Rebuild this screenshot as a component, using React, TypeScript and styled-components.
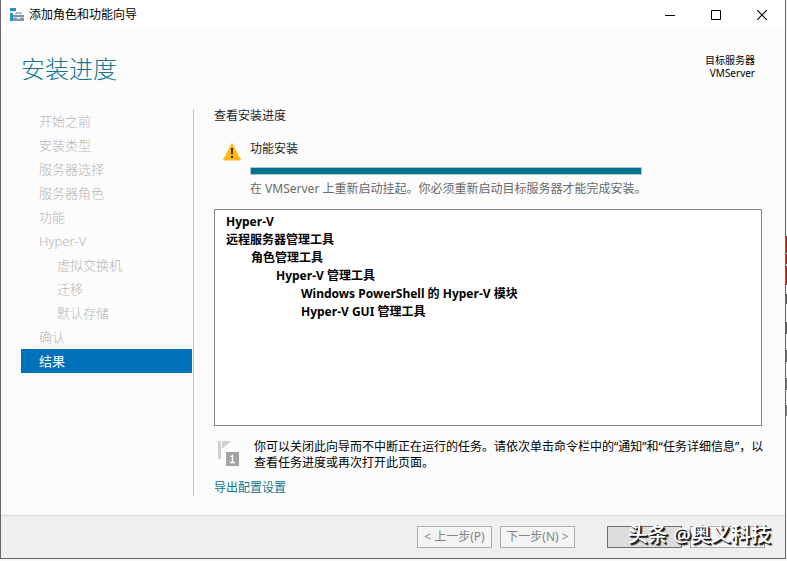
import React from "react";
import styled, { createGlobalStyle } from "styled-components";

const GlobalStyle = createGlobalStyle`
  *, *::before, *::after { box-sizing: border-box; }
  html, body, #root { height: 100%; }
  body {
    margin: 0;
    overflow: hidden;
    font: 12px/16px "Noto Sans", "Noto Sans CJK SC", sans-serif;
    color: #1e1e1e;
  }
`;

const Desktop = styled.div`
  min-height: 100%;
  display: flex;
  padding: 0 1px 2px 0;
  background: linear-gradient(
      to bottom,
      #f4f4f4 236px, #b3121d 236px 253px, #e9c9cb 253px 254px, #b3121d 254px 264px,
      #e9c9cb 264px 266px, #b3121d 266px 285px, #f4f4f4 285px 294px, #555 294px 304px,
      #f4f4f4 304px 322px, #555 322px 334px, #f4f4f4 334px 350px, #666 350px 362px,
      #f4f4f4 362px 378px, #777 378px 390px, #f4f4f4 390px 405px, #777 405px 416px,
      #f8f8f8 416px
    );
`;

const Window = styled.main`
  position: relative;
  flex: 1;
  min-width: 0;
  display: flex;
  flex-direction: column;
  border: 1px solid #666;
  border-top: 0;
  background: #fcfcfc;
`;

const TitleBar = styled.header`
  display: flex;
  align-items: center;
  height: 30px;
  padding-left: 8px;
  background: #fff;
  color: #000;
`;

const TitleText = styled.span`
  flex: 1;
  margin-left: 4px;
`;

const CaptionButton = styled.button`
  display: grid;
  place-items: center;
  width: 46px;
  height: 28px;
  padding: 0;
  border: 0;
  background: none;
  color: #000;
`;

const Heading = styled.div`
  display: flex;
  justify-content: space-between;
  align-items: flex-start;
  padding: 21px 30px 0 20px;
  height: 79px;
`;

const PageTitle = styled.h1`
  margin: 0;
  font-size: 24px;
  line-height: 36px;
  font-weight: 300;
  color: #12758f;
`;

const Destination = styled.div`
  padding-top: 3px;
  font-size: 10px;
  line-height: 13px;
  text-align: right;
  color: #000;
`;

const Body = styled.div`
  flex: 1;
  display: flex;
  padding: 0 20px 19px;
`;

const Steps = styled.nav`
  flex: none;
  width: 173px;
  border-right: 1px solid #c4c4c4;
  padding-right: 1px;
`;

const StepList = styled.ul`
  list-style: none;
  margin: 0;
  padding: 0;
`;

const Step = styled.li<{ $nested?: boolean; $current?: boolean }>`
  height: 24px;
  padding-left: ${(p) => (p.$nested ? 36 : 18)}px;
  font-size: 13px;
  line-height: 24px;
  font-weight: ${(p) => (p.$current ? 400 : 300)};
  color: ${(p) => (p.$current ? "#fff" : "#b4b4b4")};
  background: ${(p) => (p.$current ? "#0072bc" : "transparent")};
`;

const Content = styled.section`
  flex: 1;
  min-width: 0;
  display: flex;
  flex-direction: column;
  padding-left: 20px;
`;

const SectionLabel = styled.div`
  line-height: 14px;
`;

const Job = styled.div`
  display: grid;
  grid-template-columns: 20px minmax(0, 1fr);
  column-gap: 8px;
  margin-top: 17px;
  padding: 0 123px 0 8px;
`;

const JobIcon = styled.div`
  padding-top: 2px;
`;

const JobTitle = styled.div`
  line-height: 18px;
`;

const Progress = styled.progress`
  display: block;
  width: 100%;
  height: 8px;
  margin: 9px 0 6px;
  border: 1px solid #a9c8d0;
  appearance: none;
  background: #e6e6e6;
  &::-webkit-progress-bar { background: #e6e6e6; }
  &::-webkit-progress-value { background: #00738f; }
`;

const JobStatus = styled.p`
  margin: 0;
  white-space: nowrap;
  color: #696969;
`;

const Features = styled.ul`
  flex: 1;
  list-style: none;
  margin: 12px 3px 0 0;
  padding: 3px 11px;
  border: 1px solid #828790;
  background: #fff;
  color: #000;
  font-weight: 700;
  line-height: 18px;
`;

const Feature = styled.li<{ $depth: number }>`
  padding-left: ${(p) => p.$depth * 25}px;
`;

const Note = styled.div`
  display: flex;
  gap: 12px;
  margin-top: 13px;
  padding-left: 4px;
  color: #000;
`;

const NoteIcon = styled.div`
  flex: none;
  width: 24px;
`;

const NoteText = styled.p`
  margin: 0 -4px 0 0;
`;

const ExportLink = styled.a`
  align-self: flex-start;
  margin: 9px 0 0;
  color: #12758f;
  text-decoration: none;
`;

const Footer = styled.footer`
  display: flex;
  height: 43px;
  padding: 10px 20px 0;
  justify-content: flex-end;
  gap: 8px;
  border-top: 1px solid #d9d9d9;
  background: #efefef;
`;

const StepButtons = styled.div`
  display: flex;
  gap: 8px;
  margin-right: 24px;
`;

const Button = styled.button<{ $primary?: boolean }>`
  width: 75px;
  height: 22px;
  padding: 0;
  border: 1px solid ${(p) => (p.$primary ? "#707070" : "#adadad")};
  background: ${(p) => (p.$primary ? "#dddddd" : "#f4f4f4")};
  color: #838383;
  font: inherit;
  line-height: 20px;
  white-space: nowrap;
`;

const Watermark = styled.div`
  position: absolute;
  right: 14px;
  bottom: 8px;
  font-size: 20px;
  line-height: 30px;
  font-weight: 500;
  color: #fff;
  text-shadow: 1px 1px 0 #111, 2px 2px 1px #222;
  pointer-events: none;
`;

const steps = [
  { label: "开始之前" },
  { label: "安装类型" },
  { label: "服务器选择" },
  { label: "服务器角色" },
  { label: "功能" },
  { label: "Hyper-V" },
  { label: "虚拟交换机", nested: true },
  { label: "迁移", nested: true },
  { label: "默认存储", nested: true },
  { label: "确认" },
  { label: "结果", current: true },
];

const features = [
  { label: "Hyper-V", depth: 0 },
  { label: "远程服务器管理工具", depth: 0 },
  { label: "角色管理工具", depth: 1 },
  { label: "Hyper-V 管理工具", depth: 2 },
  { label: "Windows PowerShell 的 Hyper-V 模块", depth: 3 },
  { label: "Hyper-V GUI 管理工具", depth: 3 },
];

const ServerIcon = () => (
  <svg width="16" height="16" viewBox="0 0 16 16" aria-hidden="true">
    <path d="M1 1h6v4H1zM1 6h3v8H1z" fill="#2b8fc9" />
    <path d="M1 4.500h6" stroke="#d5eaf5" />
    <path d="M7 7.500V6h5v1.500" fill="none" stroke="#6f8794" />
    <path d="M4 8h11v6H4z" fill="#7d97a5" />
    <path d="M4 10.500h11" stroke="#c3d0d7" />
    <path d="M8 10h3v2H8z" fill="#dce6eb" />
  </svg>
);

const WarningIcon = () => (
  <svg width="20" height="20" viewBox="0 0 20 20" role="img" aria-label="警告">
    <path d="M10 1.500 18.500 18h-17z" fill="#fdb813" stroke="#fdb813" strokeLinejoin="round" />
    <path d="M9 6h2l-.3 6.500H9.300zM9 14h2v2H9z" fill="#2a2000" />
  </svg>
);

const FlagIcon = () => (
  <svg width="24" height="28" viewBox="0 0 24 28" aria-hidden="true">
    <path d="M0 2h3v18H0zM4 2h9L4 10z" fill="#cfcfcf" />
    <path d="M8 13h13v14H8z" fill="#a3a3a3" />
    <path d="M12.500 18l2-1.500v7M12 23.500h5" fill="none" stroke="#fff" strokeWidth="1.300" />
  </svg>
);

export default function App() {
  return (
    <>
      <GlobalStyle />
      <Desktop>
        <Window>
          <TitleBar>
            <ServerIcon />
            <TitleText>添加角色和功能向导</TitleText>
            <CaptionButton aria-label="最小化">
              <svg width="10" height="10" viewBox="0 0 10 10"><path d="M0 5.500h10" stroke="currentColor" /></svg>
            </CaptionButton>
            <CaptionButton aria-label="最大化">
              <svg width="10" height="10" viewBox="0 0 10 10"><path d="M.5.5h9v9h-9z" fill="none" stroke="currentColor" /></svg>
            </CaptionButton>
            <CaptionButton aria-label="关闭窗口">
              <svg width="10" height="10" viewBox="0 0 10 10"><path d="M0 0l10 10M10 0 0 10" stroke="currentColor" strokeWidth="1.200" /></svg>
            </CaptionButton>
          </TitleBar>
          <Heading>
            <PageTitle>安装进度</PageTitle>
            <Destination>
              目标服务器
              <br />
              VMServer
            </Destination>
          </Heading>
          <Body>
            <Steps aria-label="向导步骤">
              <StepList>
                {steps.map((s) => (
                  <Step key={s.label} $nested={s.nested} $current={s.current} aria-current={s.current ? "step" : undefined}>
                    {s.label}
                  </Step>
                ))}
              </StepList>
            </Steps>
            <Content>
              <SectionLabel id="progress-label">查看安装进度</SectionLabel>
              <Job>
                <JobIcon><WarningIcon /></JobIcon>
                <div>
                  <JobTitle>功能安装</JobTitle>
                  <Progress value={100} max={100} aria-labelledby="progress-label" />
                  <JobStatus>在 VMServer 上重新启动挂起。你必须重新启动目标服务器才能完成安装。</JobStatus>
                </div>
              </Job>
              <Features>
                {features.map((f) => (
                  <Feature key={f.label} $depth={f.depth}>{f.label}</Feature>
                ))}
              </Features>
              <Note>
                <NoteIcon><FlagIcon /></NoteIcon>
                <NoteText>
                  你可以关闭此向导而不中断正在运行的任务。请依次单击命令栏中的“通知”和“任务详细信息”，以查看任务进度或再次打开此页面。
                </NoteText>
              </Note>
              <ExportLink href="#export">导出配置设置</ExportLink>
            </Content>
          </Body>
          <Footer>
            <StepButtons>
              <Button disabled>&lt; 上一步(P)</Button>
              <Button disabled>下一步(N) &gt;</Button>
            </StepButtons>
            <Button $primary aria-label="关闭" />
            <Button disabled aria-label="取消" />
          </Footer>
          <Watermark>头条 @奥义科技</Watermark>
        </Window>
      </Desktop>
    </>
  );
}
